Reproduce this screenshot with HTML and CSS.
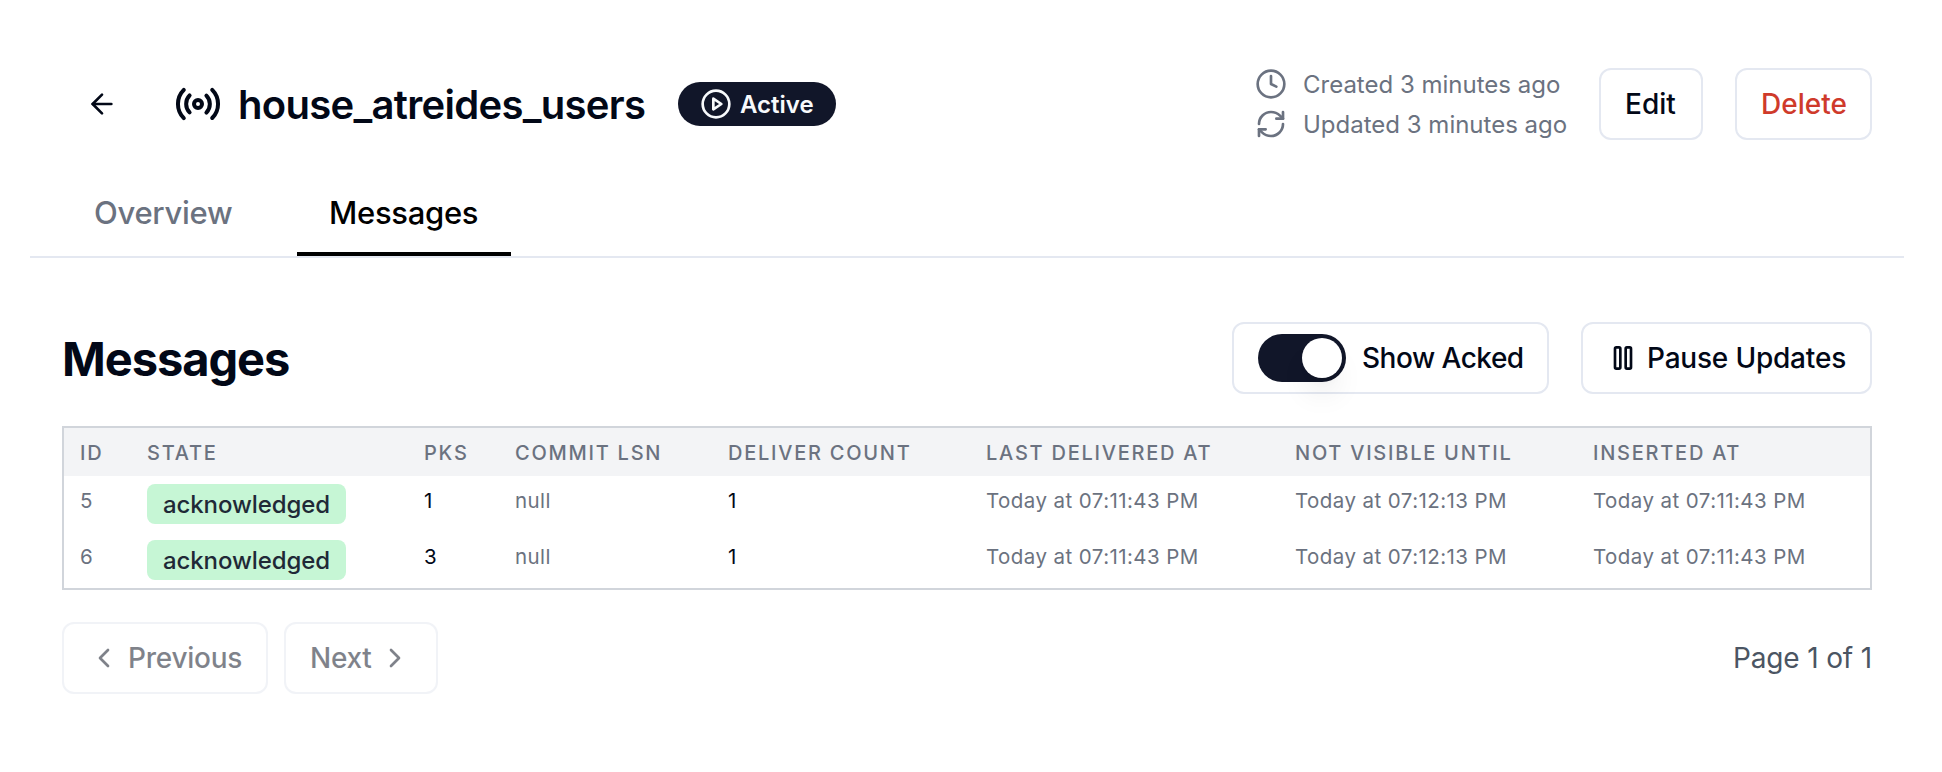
FILE: index.html
```html
<!DOCTYPE html>
<html lang="en">
<head>
<meta charset="utf-8">
<title>house_atreides_users</title>
<link rel="stylesheet" href="styles.css">
</head>
<body>
<header class="topbar">
  <a class="back" aria-label="Back"><svg class="icon" viewBox="0 0 24 24"><path d="m12 19-7-7 7-7"/><path d="M19 12H5"/></svg></a>
  <svg class="icon icon-lg" viewBox="0 0 24 24"><path d="M4.9 19.1C1 15.2 1 8.8 4.9 4.9"/><path d="M7.8 16.2c-2.3-2.3-2.3-6.1 0-8.5"/><circle cx="12" cy="12" r="2"/><path d="M16.2 7.8c2.3 2.3 2.3 6.1 0 8.5"/><path d="M19.1 4.9C23 8.8 23 15.1 19.1 19"/></svg>
  <h1 class="title">house_atreides_users</h1>
  <div class="status"><svg class="icon" viewBox="0 0 24 24"><circle cx="12" cy="12" r="10"/><path d="m10 8 6 4-6 4Z"/></svg><span>Active</span></div>
  <div class="times">
    <div class="time"><svg class="icon" viewBox="0 0 24 24"><circle cx="12" cy="12" r="10"/><path d="M12 6v6l4 2"/></svg><span>Created 3 minutes ago</span></div>
    <div class="time"><svg class="icon" viewBox="0 0 24 24"><path d="M3 12a9 9 0 0 1 9-9 9.75 9.75 0 0 1 6.74 2.74L21 8"/><path d="M21 3v5h-5"/><path d="M21 12a9 9 0 0 1-9 9 9.75 9.75 0 0 1-6.74-2.74L3 16"/><path d="M8 16H3v5"/></svg><span>Updated 3 minutes ago</span></div>
  </div>
  <button class="btn btn-edit">Edit</button>
  <button class="btn btn-delete">Delete</button>
</header>
<nav class="tabs">
  <a class="tab">Overview</a>
  <a class="tab tab-active">Messages</a>
</nav>
<main class="content">
  <div class="section-head">
    <h2 class="heading">Messages</h2>
    <label class="btn btn-toggle"><i class="switch"><i class="thumb"></i></i><span>Show Acked</span></label>
    <button class="btn btn-pause"><svg class="icon" viewBox="0 0 24 24"><rect x="14" y="4" width="4" height="16" rx="1"/><rect x="6" y="4" width="4" height="16" rx="1"/></svg><span>Pause Updates</span></button>
  </div>
  <div class="table">
    <div class="row row-head"><span>ID</span><span>STATE</span><span>PKS</span><span>COMMIT LSN</span><span>DELIVER COUNT</span><span>LAST DELIVERED AT</span><span>NOT VISIBLE UNTIL</span><span>INSERTED AT</span></div>
    <div class="row"><span>5</span><div><span class="tag">acknowledged</span></div><span class="dark">1</span><span>null</span><span class="dark">1</span><span>Today at 07:11:43 PM</span><span>Today at 07:12:13 PM</span><span>Today at 07:11:43 PM</span></div>
    <div class="row"><span>6</span><div><span class="tag">acknowledged</span></div><span class="dark">3</span><span>null</span><span class="dark">1</span><span>Today at 07:11:43 PM</span><span>Today at 07:12:13 PM</span><span>Today at 07:11:43 PM</span></div>
  </div>
  <div class="pager">
    <button class="btn btn-prev"><svg class="icon" viewBox="0 0 24 24"><path d="m15 18-6-6 6-6"/></svg><span>Previous</span></button>
    <button class="btn btn-next"><span>Next</span><svg class="icon" viewBox="0 0 24 24"><path d="m9 18 6-6-6-6"/></svg></button>
    <div class="page-info">Page 1 of 1</div>
  </div>
</main>
</body>
</html>
```
FILE: styles.css
```css
* { box-sizing: border-box; }
body { margin: 0; background: #fff; color: #020817; font-family: Inter, "Liberation Sans", sans-serif; }
h1, h2 { margin: 0; }
.icon { width: 32px; height: 32px; flex: none; fill: none; stroke: currentColor; stroke-width: 2; stroke-linecap: round; stroke-linejoin: round; }
.icon-lg { width: 48px; height: 48px; }
.topbar { display: flex; align-items: center; height: 72px; margin: 68px 70px 0 86px; }
.back { display: flex; margin-right: 56px; }
.title { margin-left: 16px; width: 408px; padding-top: 2px; font-size: 40px; line-height: 56px; font-weight: 600; letter-spacing: -.7px; white-space: nowrap; }
.status { display: flex; align-items: center; gap: 8px; margin-left: 32px; width: 158px; height: 44px; padding-left: 22px; border-radius: 22px; background: #111629; color: #f8fafc; font-size: 24px; font-weight: 600; }
.times { margin-left: auto; width: 313px; color: #6b7280; font-size: 24px; }
.time { display: flex; align-items: center; gap: 16px; height: 40px; white-space: nowrap; }
.btn { display: flex; align-items: center; flex: none; height: 72px; padding: 0 0 0 24px; border: 2px solid #e4e8f1; border-radius: 12px; background: #fff; color: #020817; font: 500 28px Inter, "Liberation Sans", sans-serif; white-space: nowrap; }
.btn-edit { width: 104px; margin-left: 31px; }
.btn-delete { width: 137px; margin-left: 32px; color: #cf3a2b; }
.tabs { display: flex; height: 86px; margin: 32px 38px 0 30px; border-bottom: 2px solid #e4e8f1; padding-left: 32px; gap: 32px; font-size: 31px; font-weight: 500; color: #6b7280; }
.tab { display: flex; height: 84px; width: 203px; padding: 21px 0 0 32px; line-height: 40px; letter-spacing: -.3px; }
.tab-active { width: 214px; border-bottom: 4px solid #000; color: #000; }
.content { margin: 64px 70px 0 62px; }
.section-head { display: flex; align-items: center; height: 72px; }
.heading { margin-right: auto; padding-top: 1px; font-size: 47px; font-weight: 700; letter-spacing: -1.05px; }
.btn-toggle { width: 317px; gap: 16px; letter-spacing: -.5px; }
.switch { display: flex; width: 88px; height: 48px; padding: 4px; border-radius: 24px; background: #111629; justify-content: flex-end; }
.thumb { width: 40px; height: 40px; border-radius: 20px; background: #fff; box-shadow: 0 20px 30px -6px rgb(0 0 0 / .1), 0 8px 12px -8px rgb(0 0 0 / .1); }
.btn-pause { width: 291px; margin-left: 32px; gap: 8px; letter-spacing: -.2px; }
.table { margin-top: 32px; border: 2px solid #d1d5db; color: #6b7280; font-size: 20.5px; letter-spacing: .43px; }
.row { display: grid; grid-template-columns: 67px 277px 91px 213px 258px 309px 298px 1fr; height: 56px; padding: 8px 0 0 16px; line-height: 34px; white-space: nowrap; }
.row-head { height: 48px; background: #f3f4f6; font-size: 20px; font-weight: 500; letter-spacing: 1.75px; }
.dark { color: #020817; }
.tag { display: block; width: 199px; height: 40px; padding-left: 16px; border-radius: 8px; background: #c6f6d5; color: #1f2937; font-size: 24px; font-weight: 500; line-height: 42px; letter-spacing: -.1px; }
.pager { display: flex; align-items: center; margin-top: 32px; gap: 16px; }
.btn-prev { width: 206px; opacity: .5; gap: 8px; letter-spacing: -.25px; }
.btn-next { width: 154px; opacity: .5; gap: 8px; letter-spacing: -.3px; }
.page-info { margin-left: auto; color: #4b5563; font-size: 28px; letter-spacing: -.15px; }
```
